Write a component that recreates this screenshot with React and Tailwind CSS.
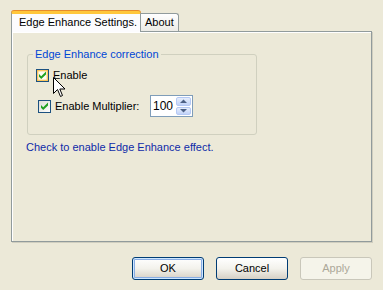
import React from 'react';

const CheckBox = ({ hot }) => (
  <svg width="13" height="13" viewBox="0 0 13 13" className="shrink-0">
    <defs>
      <linearGradient id="cbn" x1="0" y1="0" x2="1" y2="1">
        <stop offset="0" stopColor="#DCDBD3" />
        <stop offset="1" stopColor="#FFFFFF" />
      </linearGradient>
    </defs>
    <rect x="0.5" y="0.5" width="12" height="12" fill={hot ? '#F8B636' : 'url(#cbn)'} stroke="#1C5180" />
    {hot && <rect x="2" y="2" width="9" height="9" fill="#FDFCF5" stroke="#FCD78A" strokeWidth="1" />}
    <path d="M3 5 L5.2 7.2 L10 2.6 L10 5.4 L5.2 10 L3 7.8 Z" fill="#21A121" />
  </svg>
);

const Cursor = () => (
  <svg width="13" height="21" viewBox="0 0 13 21" className="absolute left-[53px] top-[77px]">
    <path
      d="M0.5 0.5 L0.5 16.5 L4.5 12.5 L7.5 19.5 L9.5 18.5 L6.8 12 L12 12 Z"
      fill="#FFFFFF"
      stroke="#000000"
      strokeWidth="1"
    />
  </svg>
);

const SpinBox = () => (
  <div className="flex h-[22px] w-[43px] items-center border border-[#7F9DB9] bg-white">
    <span className="flex-1 pl-[2px] text-[12px] leading-[14px] text-black">100</span>
    <div className="mr-[1px] flex h-[18px] w-[15px] flex-col gap-[1px]">
      <div className="flex flex-1 items-center justify-center rounded-[2px] border border-[#B5C9F5] bg-gradient-to-b from-[#E6EEFC] to-[#C2D3F8]">
        <svg width="7" height="4" viewBox="0 0 7 4">
          <path d="M0 4 L3.5 0.5 L7 4 Z" fill="#4D6185" />
        </svg>
      </div>
      <div className="flex flex-1 items-center justify-center rounded-[2px] border border-[#B5C9F5] bg-gradient-to-b from-[#E6EEFC] to-[#C2D3F8]">
        <svg width="7" height="4" viewBox="0 0 7 4">
          <path d="M0 0 L3.5 3.5 L7 0 Z" fill="#4D6185" />
        </svg>
      </div>
    </div>
  </div>
);

const Button = ({ children, def, disabled }) => {
  if (disabled) {
    return (
      <div className="flex h-[23px] w-[72px] items-center justify-center rounded-[3px] border border-[#C9C7BA] bg-[#F5F4EA] text-[#ACA899]">
        {children}
      </div>
    );
  }
  return (
    <div
      className={
        'flex h-[23px] w-[72px] items-center justify-center rounded-[3px] border border-[#003C74] bg-gradient-to-b from-[#FFFFFF] via-[#F3F2EC] to-[#D6D0C5] text-black ' +
        (def ? 'shadow-[inset_0_0_0_1px_#CEE7FF,inset_0_0_0_2px_#89ADE4]' : '')
      }
    >
      {children}
    </div>
  );
};

export default function App() {
  return (
    <div
      className="relative h-[290px] w-[383px] overflow-hidden bg-[#ECE9D8] px-[11px] pt-[11px] text-[11px] text-black"
      style={{ fontFamily: '"Liberation Sans", Arial, sans-serif' }}
    >
      {/* tabs */}
      <div className="relative z-10 flex h-[21px] items-end">
        <div className="flex h-[21px] w-[130px] items-center rounded-t-[3px] border-x border-t-[3px] border-x-[#919B9C] border-t-[#FFC73C] bg-[#FCFCFE] pl-[7px] pb-[1px] shadow-[0_-1px_0_#E68B2C]">
          Edge Enhance Settings.
        </div>
        <div className="mb-[1px] flex h-[18px] w-[38px] items-center rounded-tr-[3px] border-r border-t border-[#919B9C] bg-gradient-to-b from-[#FFFFFF] to-[#ECEBE6] pl-[4px]">
          About
        </div>
      </div>

      {/* panel */}
      <div className="-mt-[1px] h-[211px] w-[361px] border border-[#919B9C] bg-[#ECE9D8] pt-[22px] shadow-[inset_1px_1px_0_#FFFFFF,1px_1px_0_#D0CEBF]">
        <div className="ml-[15px] h-[81px] w-[230px] rounded-[3px] border border-[#D0D0BF]">
          <div className="-mt-[7px] ml-[5px] w-fit bg-[#ECE9D8] px-[2px] leading-[13px] text-[#0046D5]">
            Edge Enhance correction
          </div>
          <div className="mt-[8px] flex h-[13px] items-center pl-[8px]">
            <CheckBox hot />
            <span className="ml-[4px] leading-[13px]">Enable</span>
          </div>
          <div className="mt-[13px] flex h-[22px] items-center pl-[10px]">
            <CheckBox />
            <span className="ml-[4px] w-[95px] leading-[13px]">Enable Multiplier:</span>
            <SpinBox />
          </div>
        </div>
        <div className="ml-[14px] mt-[6px] leading-[13px] text-[#0F2BA8]">Check to enable Edge Enhance effect.</div>
      </div>

      {/* buttons */}
      <div className="mt-[15px] flex justify-end gap-[12px]">
        <Button def>OK</Button>
        <Button>Cancel</Button>
        <Button disabled>Apply</Button>
      </div>

      <Cursor />
    </div>
  );
}
